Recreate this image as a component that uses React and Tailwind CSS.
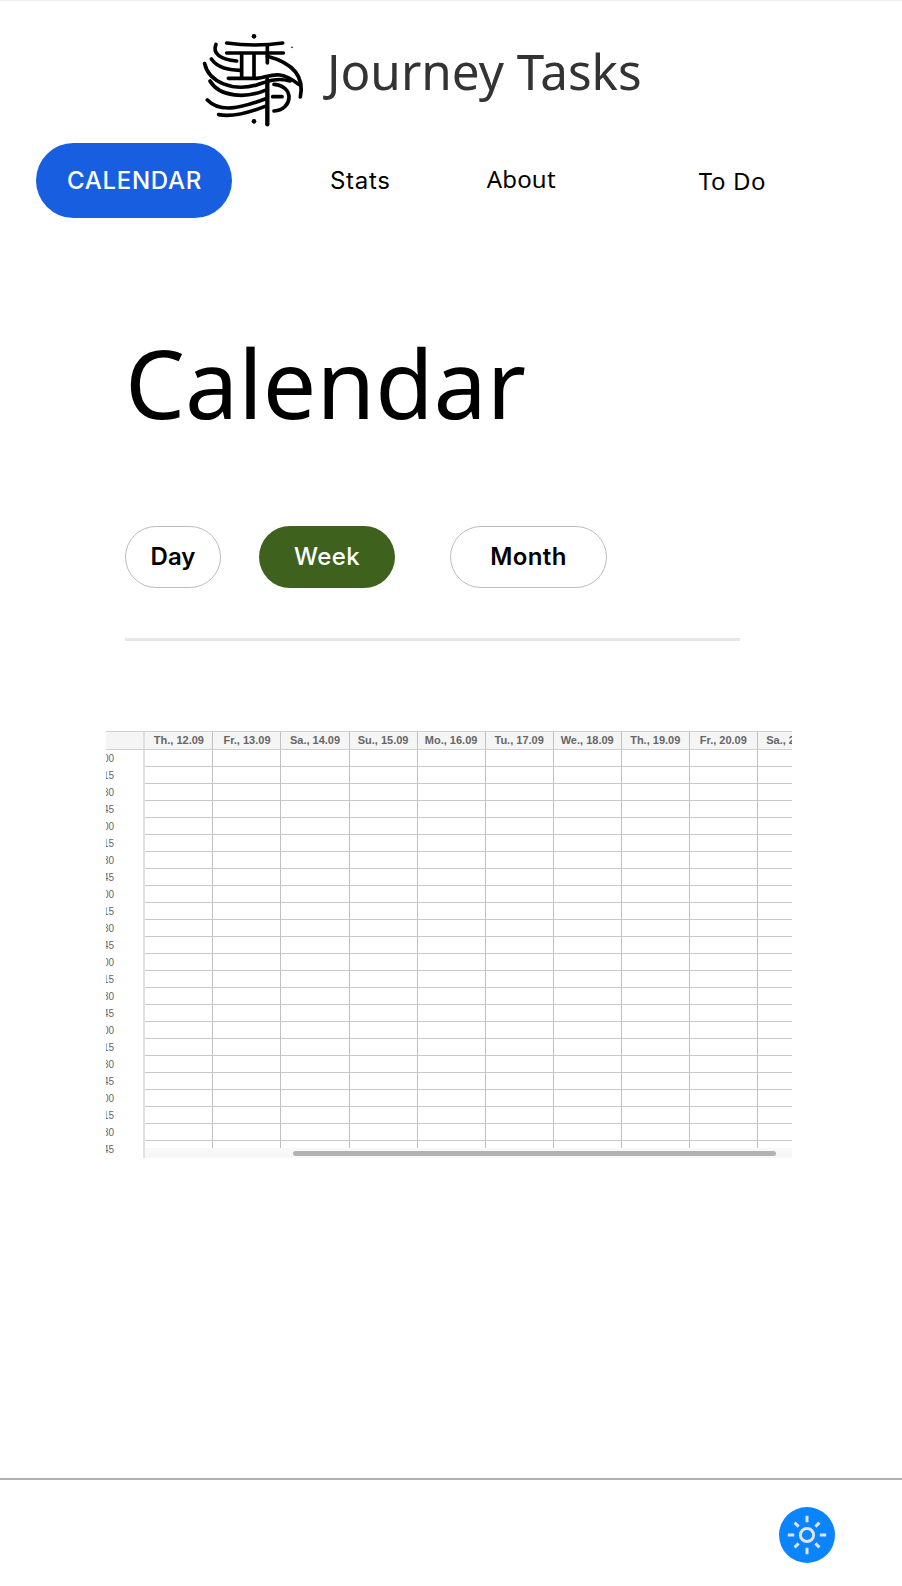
import React from "react";

const days = ["Th., 12.09","Fr., 13.09","Sa., 14.09","Su., 15.09","Mo., 16.09","Tu., 17.09","We., 18.09","Th., 19.09","Fr., 20.09","Sa., 21.09"];
const mins = ["00","15","30","45","00","15","30","45","00","15","30","45","00","15","30","45","00","15","30","45","00","15","30","45"];

function Logo() {
  return (
    <svg viewBox="0 0 390 360" className="w-[130px] h-[120px] shrink-0 mt-[16px]" fill="none" stroke="#000" strokeWidth="11" strokeLinecap="round">
      <circle cx="192" cy="52" r="7" fill="#000" stroke="none" />
      <circle cx="192" cy="307" r="7" fill="#000" stroke="none" />
      <circle cx="306" cy="85" r="2.5" fill="#000" stroke="none" />
      <path d="M110 72 Q195 84 278 72" />
      <path d="M110 102 H280" />
      <path d="M155 108 V172" />
      <path d="M192 108 V172" />
      <path d="M232 80 V132" />
      <path d="M78 76 C66 104 92 122 140 126" />
      <path d="M64 120 C84 148 116 152 150 154" />
      <path d="M44 134 C56 190 130 218 200 198 C240 184 262 176 300 186" />
      <path d="M232 112 C300 130 345 165 331 234" />
      <path d="M115 178 H200 C240 176 262 146 326 196" />
      <path d="M60 186 C90 236 170 238 225 214" />
      <path d="M232 182 V316" strokeWidth="13" />
      <path d="M252 196 C312 200 312 270 252 276" />
      <path d="M248 233 H276" />
      <path d="M52 243 C90 282 150 268 225 240" />
      <path d="M86 287 C130 296 190 276 225 262" />
    </svg>
  );
}

function Sun() {
  return (
    <svg viewBox="0 0 56 56" className="w-[56px] h-[56px]" fill="none" stroke="#e2e2e2">
      <circle cx="28" cy="28" r="6.6" strokeWidth="3" />
      <path d="M28 8.8 V15.2 M28 40.8 V47.2 M8.8 28 H15.2 M40.8 28 H47.2 M15.6 15.6 L19.6 19.6 M36.4 36.4 L40.4 40.4 M40.4 15.6 L36.4 19.6 M19.6 36.4 L15.6 40.4" strokeWidth="3" />
    </svg>
  );
}

export default function App() {
  return (
    <div className="w-[902px] h-[1586px] bg-white flex flex-col border-t border-[#eeeeee] font-['Inter',sans-serif] overflow-hidden">
      <header className="flex items-center h-[126px] pl-[190px] pt-[14px]">
        <Logo />
        <span className="font-['Noto_Sans',sans-serif] text-[49.4px] leading-none text-[#333333] ml-[7px]">Journey Tasks</span>
      </header>
      <nav className="flex items-center h-[75px] mt-[16px] pl-[36px] text-[24px] text-black">
        <span className="w-[196px] h-[75px] rounded-full bg-[#175ee0] text-white font-medium tracking-[0.7px] pl-[1px] flex items-center justify-center">CALENDAR</span>
        <span className="ml-[98px] tracking-[0.7px]">Stats</span>
        <span className="ml-[96px] -mt-[4px] font-['Noto_Sans',sans-serif] tracking-[0.2px]">About</span>
        <span className="ml-[143px] font-['Noto_Sans',sans-serif] tracking-[0.6px]">To Do</span>
      </nav>
      <main className="flex flex-col pl-[125px] pt-[93px]">
        <h1 className="font-['Noto_Sans',sans-serif] text-[95px] leading-[142px] text-black">Calendar</h1>
        <div className="flex items-center mt-[73px] text-[24px] font-semibold">
          <button className="w-[96px] h-[62px] rounded-full border-[1.5px] border-[#bdbdbd] text-black">Day</button>
          <button className="w-[136px] h-[62px] ml-[38px] rounded-full bg-[#3e621d] text-white font-medium tracking-[0.4px]">Week</button>
          <button className="w-[157px] h-[62px] ml-[55px] rounded-full border-[1.5px] border-[#bdbdbd] text-black tracking-[0.4px]">Month</button>
        </div>
        <div className="w-[615px] h-[3px] mt-[50px] bg-[#e6e6e6]" />
      </main>
      <section className="w-[686px] h-[427px] ml-[106px] mt-[90px] overflow-hidden relative font-['Liberation_Sans',sans-serif]">
        <div className="flex h-[19px] bg-[#f5f5f5] border-y border-[#d0d0d0] w-[800px]">
          <div className="w-[39.4px] shrink-0 border-r-2 border-[#e0e0e0]" />
          {days.map((d) => (
            <div key={d} className="w-[68.05px] shrink-0 border-r border-[#c0c0c0] text-[11px] font-bold text-[#666666] text-center leading-[17px] whitespace-nowrap overflow-hidden">{d}</div>
          ))}
        </div>
        {mins.map((m, i) => (
          <div key={i} className="flex h-[17px] w-[800px]">
            <div className="w-[39.4px] shrink-0 border-r-2 border-[#e0e0e0] text-[10px] text-[#666666] leading-[17px] -indent-[3px] overflow-hidden">{m}</div>
            {days.map((d) => (
              <div key={d} className={`w-[68.05px] shrink-0 border-r border-[#c0c0c0] ${i === 23 ? "" : "border-b border-b-[#c8c8c8]"}`} />
            ))}
          </div>
        ))}
        <div className="absolute left-[39px] right-0 bottom-0 h-[10px] bg-[#f8f8f8]">
          <div className="absolute left-[148px] w-[483px] top-[3px] h-[5px] rounded-full bg-[#b3b3b3]" />
        </div>
      </section>
      <footer className="mt-auto h-[108px] border-t-2 border-[#b0b0b0] flex justify-end items-start pr-[67px] pt-[27px]">
        <div className="w-[56px] h-[56px] rounded-full bg-[#0a84ff] flex items-center justify-center"><Sun /></div>
      </footer>
    </div>
  );
}
